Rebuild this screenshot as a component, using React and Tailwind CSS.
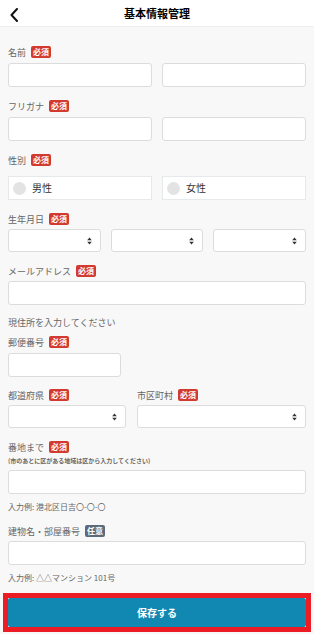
import React from "react";

const font = { fontFamily: '"Noto Sans CJK JP", "Noto Sans", sans-serif' };

function Badge({ optional }) {
  return (
    <span
      className={`ml-[5px] inline-flex h-[12px] items-center rounded-[2px] px-[2px] text-[8px] font-bold leading-none text-white ${
        optional ? "bg-[#5b6b7c]" : "bg-[#d23a30]"
      }`}
    >
      {optional ? "任意" : "必須"}
    </span>
  );
}

function Label({ children, optional, className = "" }) {
  return (
    <div className={`flex h-[12px] items-center text-[9px] leading-none text-[#666] ${className}`}>
      <span>{children}</span>
      <Badge optional={optional} />
    </div>
  );
}

function Input({ className = "" }) {
  return <div className={`h-[24px] rounded-[3px] border border-[#dcdcdc] bg-white ${className}`} />;
}

function Arrows() {
  return (
    <svg width="5" height="8" viewBox="0 0 5 8" className="shrink-0">
      <path d="M2.5 0.5 L4.8 3.2 H0.2 Z" fill="#333" />
      <path d="M2.5 7.5 L4.8 4.8 H0.2 Z" fill="#333" />
    </svg>
  );
}

function Select({ className = "" }) {
  return (
    <div
      className={`flex h-[23px] items-center justify-end rounded-[3px] border border-[#dcdcdc] bg-white pr-[8px] ${className}`}
    >
      <Arrows />
    </div>
  );
}

function Radio({ label }) {
  return (
    <div className="flex h-[24px] flex-1 items-center border border-[#e6e9ea] bg-white pl-[4px]">
      <span className="h-[13px] w-[13px] rounded-full bg-[#e3e3e3]" />
      <span className="ml-[6px] text-[10px] leading-none text-[#333]">{label}</span>
    </div>
  );
}

export default function App() {
  return (
    <div className="min-h-[634px] w-[314px] bg-[#f8f8f8]" style={font}>
      <div className="relative flex h-[27px] items-center justify-center border-b border-[#efefef] bg-white">
        <svg
          width="10"
          height="14"
          viewBox="0 0 10 14"
          className="absolute left-[9px] top-[8px]"
        >
          <path d="M8 1 L2.5 7 L8 13" fill="none" stroke="#111" strokeWidth="2" strokeLinecap="round" strokeLinejoin="round" />
        </svg>
        <span className="text-[11px] font-bold text-black">基本情報管理</span>
      </div>

      <div className="flex flex-col px-[8px]">
        <Label className="mt-[19px]">名前</Label>
        <div className="mt-[5px] flex gap-[10px]">
          <Input className="flex-1" />
          <Input className="flex-1" />
        </div>

        <Label className="mt-[13px]">フリガナ</Label>
        <div className="mt-[5px] flex gap-[10px]">
          <Input className="flex-1" />
          <Input className="flex-1" />
        </div>

        <Label className="mt-[13px]">性別</Label>
        <div className="mt-[10px] flex gap-[10px]">
          <Radio label="男性" />
          <Radio label="女性" />
        </div>

        <Label className="mt-[13px]">生年月日</Label>
        <div className="mt-[4px] flex gap-[10px]">
          <Select className="flex-1" />
          <Select className="flex-1" />
          <Select className="flex-1" />
        </div>

        <Label className="mt-[13px]">メールアドレス</Label>
        <Input className="mt-[4px]" />

        <div className="mt-[12px] flex h-[10px] items-center text-[9px] leading-none text-[#666]">
          現住所を入力してください
        </div>

        <Label className="mt-[9px]">郵便番号</Label>
        <Input className="mt-[5px] w-[113px]" />

        <div className="mt-[12px] flex gap-[11px]">
          <div className="flex w-[118px] flex-col">
            <Label>都道府県</Label>
            <Select className="mt-[4px]" />
          </div>
          <div className="flex flex-1 flex-col">
            <Label>市区町村</Label>
            <Select className="mt-[4px]" />
          </div>
        </div>

        <Label className="mt-[13px]">番地まで</Label>
        <div className="mt-[5px] flex h-[6px] items-center text-[6px] font-bold leading-none text-[#666]">
          (市のあとに区がある地域は区から入力してください)
        </div>
        <Input className="mt-[6px]" />
        <div className="mt-[8px] flex h-[9px] items-center text-[8px] leading-none text-[#666]">
          入力例: 港北区日吉〇-〇-〇
        </div>

        <Label className="mt-[14px]" optional>
          建物名・部屋番号
        </Label>
        <Input className="mt-[4px]" />
        <div className="mt-[8px] flex h-[9px] items-center text-[8px] leading-none text-[#666]">
          入力例: △△マンション 101号
        </div>

        <div className="-mx-[5px] mt-[11px] h-[39px] border-[5px] border-[#ec1c24] bg-white">
          <div className="flex h-full items-center justify-center rounded-[2px] bg-[#1188b1] text-[10px] font-bold text-white">
            保存する
          </div>
        </div>
      </div>
    </div>
  );
}
